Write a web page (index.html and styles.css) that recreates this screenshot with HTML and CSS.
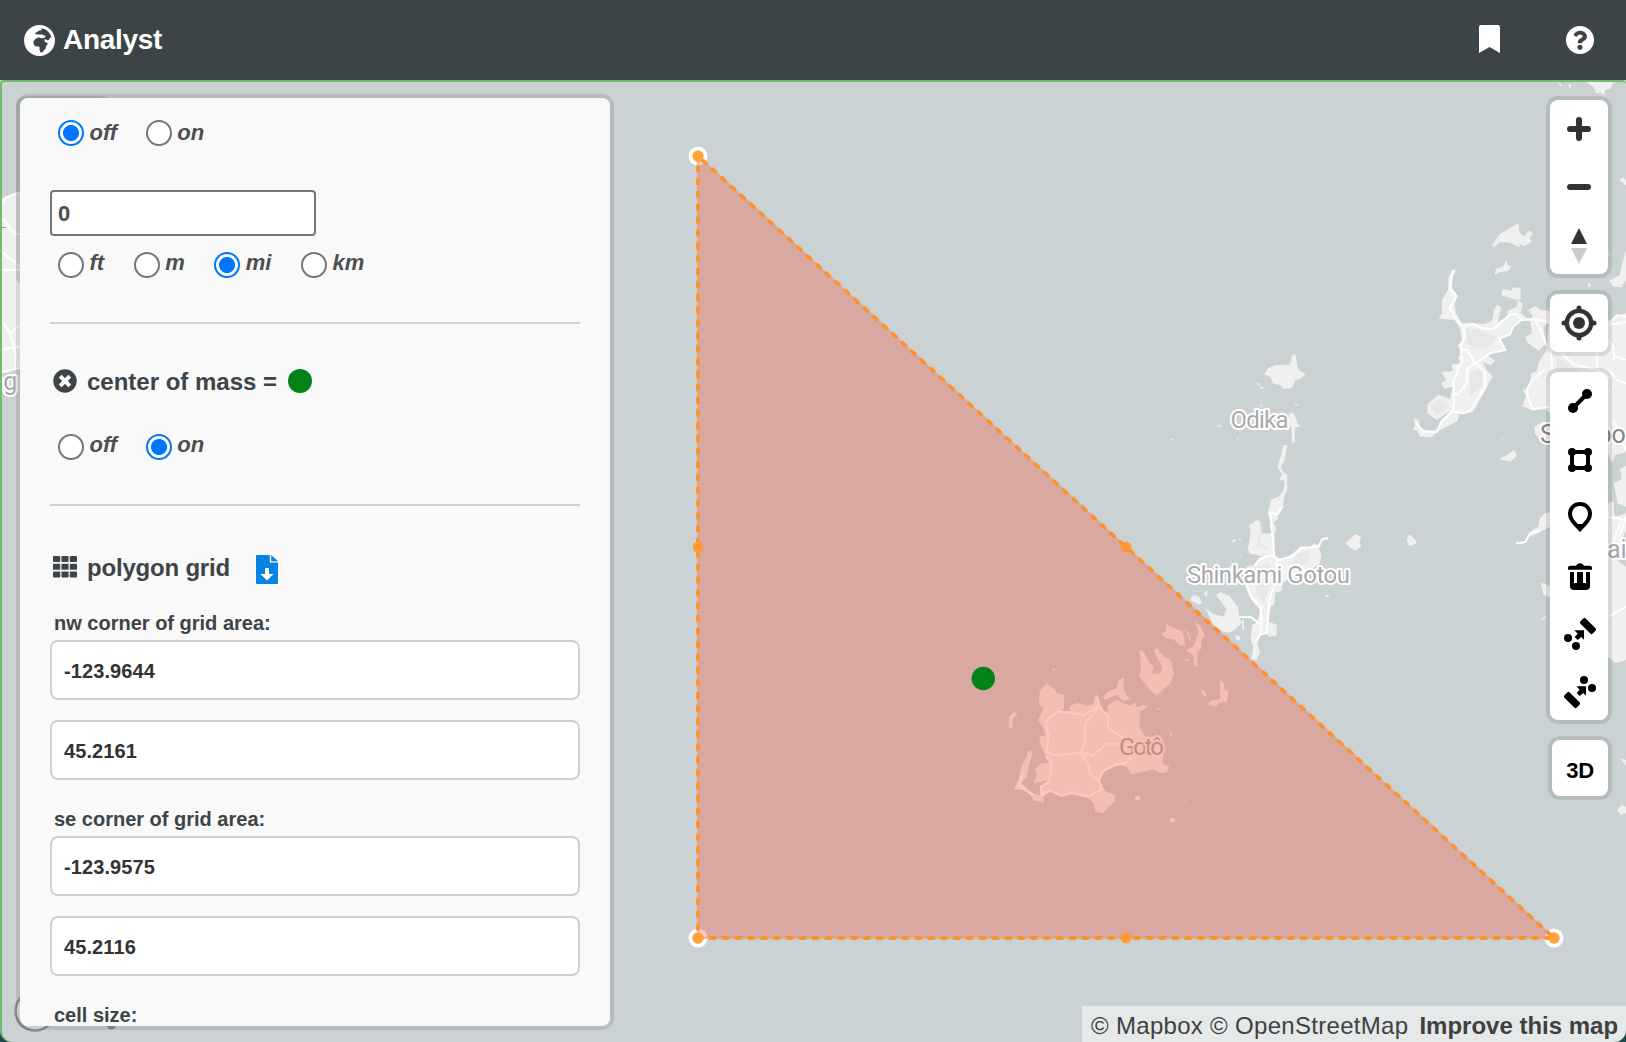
FILE: index.html
```html
<!DOCTYPE html>
<html lang="en">
<head>
<meta charset="utf-8">
<title>Analyst</title>
<link rel="stylesheet" href="styles.css">
</head>
<body>
<header class="topbar">
  <div class="brand">
    <svg class="brand-icon" viewBox="0 8 496 496"><path fill="#fff" d="M248 8C111.03 8 0 119.03 0 256s111.03 248 248 248 248-111.03 248-248S384.97 8 248 8zm160 215.5v6.93c0 5.87-3.32 11.24-8.57 13.86l-15.39 7.7a15.485 15.485 0 0 1-15.53-.97l-18.21-12.14a15.52 15.52 0 0 0-13.5-1.81l-2.65.88c-9.7 3.23-13.66 14.79-7.99 23.3l13.24 19.86c2.87 4.31 7.71 6.9 12.89 6.9h8.21c8.56 0 15.5 6.94 15.5 15.5v11.34c0 3.35-1.09 6.62-3.1 9.3l-18.74 24.98c-1.42 1.9-2.39 4.1-2.83 6.43l-4.3 22.83c-.62 3.29-2.29 6.29-4.76 8.56a159.608 159.608 0 0 0-25 29.16l-13.03 19.55a27.756 27.756 0 0 1-23.09 12.36c-10.51 0-20.12-5.94-24.82-15.34a78.902 78.902 0 0 1-8.33-35.29V367.5c0-8.56-6.94-15.5-15.5-15.5h-25.88c-14.49 0-28.38-5.76-38.63-16a54.659 54.659 0 0 1-16-38.63v-14.06c0-17.19 8.1-33.38 21.85-43.7l27.58-20.69a54.663 54.663 0 0 1 32.78-10.93h.89c8.48 0 16.85 1.97 24.43 5.77l14.72 7.36c3.68 1.84 7.93 2.14 11.83.84l47.31-15.77c6.33-2.11 10.6-8.03 10.6-14.7 0-8.56-6.94-15.5-15.5-15.5h-10.09c-4.11 0-8.05-1.63-10.96-4.54l-6.92-6.92a15.493 15.493 0 0 0-10.96-4.54H199.5c-8.56 0-15.5-6.94-15.5-15.5v-4.4c0-7.11 4.84-13.31 11.74-15.04l14.45-3.61c3.74-.94 7-3.23 9.14-6.44l8.08-12.11c2.87-4.31 7.71-6.9 12.89-6.9h24.21c8.56 0 15.5-6.94 15.5-15.5v-21.7C359.23 71.63 422.86 131.02 441.93 208H423.5c-8.56 0-15.5 6.94-15.5 15.5z"/></svg>
    <span class="brand-name">Analyst</span>
  </div>
  <nav class="top-actions">
    <svg class="bookmark" viewBox="0 0 21 28"><path fill="#fff" d="M2 0h17q2 0 2 2v26l-10.500-6L0 28V2q0-2 2-2z"/></svg>
    <svg class="help" viewBox="8 8 496 496"><path fill="#fff" d="M504 256c0 136.997-111.043 248-248 248S8 392.997 8 256C8 119.083 119.043 8 256 8s248 111.083 248 248zM262.655 90c-54.497 0-89.255 22.957-116.549 63.758-3.536 5.286-2.353 12.415 2.715 16.258l34.699 26.31c5.205 3.947 12.621 3.008 16.665-2.122 17.864-22.658 30.113-35.797 57.303-35.797 20.429 0 45.698 13.148 45.698 32.958 0 14.976-12.363 22.667-32.534 33.976C247.128 238.528 216 254.941 216 296v4c0 6.627 5.373 12 12 12h56c6.627 0 12-5.373 12-12v-1.333c0-28.462 83.186-29.647 83.186-106.667 0-58.002-60.165-102-116.531-102zM256 338c-25.365 0-46 20.635-46 46 0 25.364 20.635 46 46 46s46-20.636 46-46c0-25.365-20.635-46-46-46z"/></svg>
  </nav>
</header>

<main class="stage">
  <svg class="map" viewBox="0 80 1626 962">
    <rect x="0" y="80" width="1626" height="962" fill="#cad2d3"/>

    <!-- western mainland, behind the panel -->
    <path class="land" d="M0 200L8 196 20 192H60V368L20 368 6 373H0z"/>
    <g class="road">
      <path d="M0 206L5 198 12 195 24 191M0 219L5 221 14 234 24 234M2 252L24 270M0 270H24M2 321L10 333 16 357 15 367M2 349L24 346M11 333L20 325M2 372L24 367"/>
    </g>
    <path d="M0 227.500H6" stroke="#999" stroke-width="1"/>
    <text class="place" x="-10.500" y="390" font-size="25">ng</text>

    <!-- Shinkami islands -->
    <g transform="translate(1160 320) scale(.33333)">
      <g class="land">
        <path d="M312 163L325 145 345 135 390 134 397 104 407 103 412 140 420 153 438 162 420 177 405 181 396 205 370 207 362 196 338 190 332 172z"/>
        <path d="M290 190h10l-4 8zM298 199l12 2 2 6-12-2zM404 252h12v4h-12zM300 250l8 8-6 2zM168 320l12-7 6 8zM33 358l5-4 3 5-5 3zM230 360l5-8v10zM388 280l10-2 10 16 5 18 10 7-17 3-2 46-8 2-2-48-10-8z"/>
        <path d="M370 375H382L378 395 374 420 362 440 368 454 382 464V508L374 526 368 560 358 572 352 600 340 606 350 626 344 640V704L356 716 384 710 410 690 424 678 450 682 462 670 474 676 484 706 480 730 466 740 450 750 420 766 396 770 368 790 364 814 346 818 344 850 332 862 326 905 350 940 346 948 322 944 304 942 298 956 292 970 300 996 290 1020 274 1018 280 980 272 960 276 916 292 906 300 870 284 852 272 834 256 800 252 770 260 740 280 736 300 712 330 704 338 650 330 620 332 600 322 580 334 538 356 530 368 516 374 490 370 480 358 482 366 462 352 440 362 410z"/>
        <path d="M272 640L268 615 290 600 300 604 305 640 332 640 342 650V710L310 710 268 700 264 684z"/>
        <path d="M556 670L586 642 604 652 598 666 604 680 586 692 576 686zM212 664l14-8 4 4-12 8zM234 656h8v6zM235 706h6l6 8zM496 828l8-4 4 4-8 6zM92 832l12-8 14 8 8 16-10 6-22-12zM130 820l14-8-4 20zM200 745l24-10 16 16-28 6z"/>
        <path d="M136 864L160 882 190 890 200 868 168 826 180 816 210 828 222 846 234 862 240 900 246 908 228 926 210 938 190 936 160 914zM246 900h6v30h-5zM226 944l12 4 4 14-14-4zM330 905l20 10v30l-26 6z"/>
      </g>
      <path class="shade" d="M285 740L325 730 350 760 330 800 310 850 290 820zM400 705L450 690 440 735 400 740zM300 620L302 670 330 690 290 680z"/>
      <g class="road thin">
        <path d="M368 558L354 582 330 578 338 650 342 704 300 716 284 738M342 710L356 720 400 708 424 684 476 680 486 658 504 654M352 720L350 780 330 830 326 870 320 938 300 944 286 966M260 795L272 830 302 860 304 914 300 940M236 892H274L298 912"/>
      </g>
    </g>

    <!-- Hirado and the eastern coast -->
    <g transform="translate(1370 200) scale(.33333)">
      <g class="land">
        <path d="M364 138L390 102 430 78 446 70 448 98 464 108 476 92 490 100 480 114 484 126 464 138 452 134 446 142 420 128 388 126 376 140z"/>
        <path d="M374 224L378 206 398 200 410 180 412 194 424 200 412 214 390 216zM396 270L404 266 424 272 430 262 452 264V296L440 300 414 292 394 286z"/>
        <path d="M236 230L248 208 258 210 248 230 246 262 262 288 254 310 258 340 276 370 296 368 340 372 366 364 372 330 380 316 394 322 384 366 410 350 414 332 440 320 444 300 458 312 452 338 470 354 492 354 474 330 496 318 512 330 540 332V366L520 380 528 430 506 452 474 430 466 412 486 400 480 362 450 362 428 382 418 406 388 416 408 450 350 466 376 482 362 496 338 486 350 510 368 530 354 556 330 600 308 636 270 640 262 664 200 696 184 712 150 710 140 690 128 690 136 674 130 656 146 660 150 680 170 692 204 690 214 664 240 634 200 660 172 640 172 612 206 584 240 596 248 560 222 566 214 548 230 540 212 516 250 512 244 494 270 490 264 470 276 460 262 436 276 420 270 388 256 360 206 356 216 340 216 300 234 270z"/>
        <path d="M768 150L754 200 748 226 718 242 730 260 754 262 768 240zM652 252l6-4 5 8-5 8zM714 160h5v8zM768 340L740 346 720 360 700 366 536 366 530 450 505 490 500 515 484 520 480 560 458 570 468 590 456 618 490 632 520 620 540 640 540 700 700 720 730 800 768 860z"/>
        <path d="M388 778L420 760 432 750 440 764 416 784zM394 713h5v4h-5zM494 680L520 664 540 670V730L510 720 494 700z"/>
      </g>
      <path class="shade" d="M290 384L330 390 380 410 360 440 320 450 290 430zM300 520L340 500 335 560 300 590zM180 620L206 596 236 620 200 644zM560 470L640 520 640 600 560 560z"/>
      <path class="road thin" d="M250 212L242 240 242 268 260 288 240 322 258 360 280 380 310 372 334 384 370 388 420 344 440 342 454 360 492 358 540 366M454 360L430 380 420 404 388 416 406 450 360 460 316 490 292 504 290 550 266 582 248 584M280 382L284 410 272 440 276 488 264 500 262 520 250 540 252 600 248 634 214 664 200 696 160 694 138 670M316 490L344 516 346 560 300 632 280 640 248 634M276 450L290 450 316 490M490 350L516 400 530 438M540 366L546 510M574 460L610 492 680 510 768 560M680 456L682 508M716 376L740 346 768 350M716 420L730 440 732 480 750 540 740 570 716 574M716 376L768 366M730 466L768 480M524 510L486 540 470 570 476 600 490 628 540 620M724 640L768 640"/>
    </g>

    <g transform="translate(1500 360) scale(.33333)">
      <g class="land">
        <path d="M45 550L76 544 90 530 96 510 116 500 118 478 132 462 150 456V500L120 516 84 534 66 552zM0 296L24 286 44 274 50 288 30 306zM122 668L134 672 150 680V710L130 704zM124 780l10-12 4 2-12 12z"/>
        <path d="M310 470L326 430 340 424 345 470 378 460V510L360 560 350 600 378 620V900L346 910 324 890H300z"/>
        <path d="M330 0L378 0V290L330 300zM342 370L378 350V440L352 430zM362 330l16-12v30z"/>
      </g>
      <path fill="#cad2d3" d="M345 285l33-8v40l-18 10 6 22-22 16-14-40zM340 440l16 0 4 12-16 14z"/>
      <path class="road thin" d="M48 550L76 546 90 520 120 512M340 180L378 270M326 30L350 60 378 70M324 770L350 756 378 740M324 470L366 476 342 540M378 470L358 530"/>
    </g>

    <g transform="translate(1430 0) scale(.33333)">
      <path class="land" d="M384 246l10 6-2 10zM414 252l10 4-4 12zM468 246L552 246 540 266 524 270V286L510 278 498 280 490 260z"/>
      <path class="land" d="M568 540l12-8 8 8v16z"/>
    </g>
    <path class="land" d="M1617 810l5-5 4 2v6l-5 2zM1620 758l6 2v6z"/>
    <path class="land" d="M1407 539l2-5 5 4 3 5-6 3-3-1z"/>

    <!-- Goto -->
    <g transform="translate(980 600) scale(.33333)">
      <g class="land">
        <path d="M180 270L200 252 224 268 230 280 252 286V322L246 334 272 334 268 320 290 308 320 318 340 312 348 280 362 310 370 330 384 340 382 316 410 300 450 318 466 306 470 322 492 314 500 322 480 336 478 380 496 410 520 410 550 430 548 490 568 500 560 518 540 518 520 508 500 512 454 524 440 500 410 494 370 516 358 544 372 570 380 576 404 584 406 606 384 620 370 640 346 636 340 608 320 590 270 584 246 590 210 576 190 590 192 608 160 600 146 570 100 568 116 540 124 500 134 480 148 450 158 456 146 500 140 530 124 550 160 580 180 586 182 560 204 540 162 550 170 524 166 508 184 490 206 490 196 470 190 450 180 430 178 408 196 408 188 380 174 360 190 326 176 310z"/>
        <path d="M368 292L382 276 408 266 418 240 432 232 430 260 440 286 454 298 430 302 410 284 376 300z"/>
        <path d="M478 150L492 156 510 190 520 200 516 222 540 220 546 200 520 150 530 144 552 170 572 180 582 220 572 250 550 268 530 288 510 270 478 230 484 200zM544 100L558 96 560 72 580 84 604 92 612 110 616 140 600 136 580 118 552 112zM614 82l12 18 10 34-12-26zM644 60L662 80 674 106 664 120 662 150 652 156V200L642 196 640 166 618 150 640 140 650 110 656 96zM602 174l24 4-2 6zM630 208l4 12h-4zM594 46l8 2zM664 266L680 282 674 290 664 278zM720 240L732 250 734 270 746 272 740 306 716 308 710 320 684 314 690 304 720 296zM86 382L88 350 104 336 112 344 98 356 96 384zM216 204l10 4-4 6zM464 590l14-2 2 12-16 2zM568 656l16-2 2 14-14-2zM528 326l14-2v6zM514 352l8 8v6zM568 392l8 8v14zM610 602h6v4h-6z"/>
      </g>
      <path class="road thin" d="M352 290L356 316 314 344 236 334 196 364 206 408 200 456 230 466 304 458 314 430 316 370 356 320 382 348 384 384 430 412M304 458L340 466 380 430 420 432M304 458L326 500 330 524 356 542 370 512 410 494 438 490 456 470M200 470L216 486 206 546 182 560 186 584 210 572 246 588 274 576 320 590 368 568 356 542M128 520L116 556 160 586"/>
    </g>

    <g class="place">
      <text x="1230.500" y="427.500" textLength="58" font-size="24">Odika</text>
      <text x="1187" y="582.500" textLength="163" font-size="24">Shinkami Gotou</text>
      <text x="1119" y="755" textLength="45" font-size="24" class="place-goto">Gotô</text>
      <text x="1540" y="443" font-size="25" class="place-strong">S</text>
      <text x="1597.500" y="443" font-size="25" class="place-strong">bo</text>
      <text x="1607" y="558" font-size="25">ai</text>
    </g>

    <!-- drawn polygon -->
    <g fill="#ffae42">
      <circle cx="698" cy="547" r="5.500"/><circle cx="1126" cy="547" r="5.500"/><circle cx="1126" cy="938" r="5.500"/>
      <g stroke="#fff" stroke-width="4">
        <circle cx="698" cy="156" r="7.500"/><circle cx="698" cy="938" r="7.500"/><circle cx="1554" cy="938" r="7.500"/>
      </g>
    </g>
    <path d="M698 156V938H1554z" fill="rgb(255,68,38)" fill-opacity=".29"/>
    <g fill="none" stroke-linecap="round">
      <path d="M698 156V938H1554z" stroke="#e2a06a" stroke-opacity=".55" stroke-width="2.500"/>
      <path d="M698 156V938H1554z" stroke="#ff9030" stroke-width="3.800" stroke-dasharray="4 8.850" stroke-dashoffset="2"/>
    </g>
    <g fill="#ffa33a">
      <circle cx="698" cy="156" r="5.500"/><circle cx="698" cy="938" r="5.500"/><circle cx="1554" cy="938" r="5.500"/>
    </g>
    <g fill="#ff9a35">
      <circle cx="698" cy="547" r="5"/><circle cx="1126" cy="547" r="5"/><circle cx="1126" cy="938" r="5"/>
    </g>
    <circle cx="983.300" cy="678.500" r="11.700" fill="#028217"/>

    <!-- controls tucked under the panel -->
    <rect x="16" y="96" width="96" height="190" rx="10" fill="#000" fill-opacity=".1"/>
    <circle cx="35" cy="1011" r="19.500" fill="#e2e6e6" stroke="#8b9091" stroke-width="2.500"/>
    <circle cx="111.500" cy="1025" r="4.500" fill="#8b9091"/>
  </svg>

  <section class="panel">
    <div class="options">
      <label class="option"><i class="radio checked"></i><span>off</span></label>
      <label class="option"><i class="radio"></i><span>on</span></label>
    </div>
    <div class="radius-field">0</div>
    <div class="options units">
      <label class="option"><i class="radio"></i><span>ft</span></label>
      <label class="option"><i class="radio"></i><span>m</span></label>
      <label class="option"><i class="radio checked"></i><span>mi</span></label>
      <label class="option"><i class="radio"></i><span>km</span></label>
    </div>
    <hr class="rule">
    <h2 class="heading mass">
      <svg width="24" height="24" viewBox="0 0 24 24"><circle cx="12" cy="12" r="11.700" fill="#3d4447"/><path d="M7.200 7.200l9.600 9.600M16.800 7.200l-9.600 9.600" stroke="#fff" stroke-width="4"/></svg>
      <span>center of mass =</span><i class="swatch"></i>
    </h2>
    <div class="options raised">
      <label class="option"><i class="radio"></i><span>off</span></label>
      <label class="option"><i class="radio checked"></i><span>on</span></label>
    </div>
    <hr class="rule">
    <h2 class="heading grid">
      <svg width="24" height="22" viewBox="0 0 24 22" fill="#3d4447"><rect width="7.200" height="6" rx="1"/><rect x="8.400" width="7.200" height="6" rx="1"/><rect x="16.800" width="7.200" height="6" rx="1"/><rect y="7.800" width="7.200" height="6" rx="1"/><rect x="8.400" y="7.800" width="7.200" height="6" rx="1"/><rect x="16.800" y="7.800" width="7.200" height="6" rx="1"/><rect y="15.500" width="7.200" height="6" rx="1"/><rect x="8.400" y="15.500" width="7.200" height="6" rx="1"/><rect x="16.800" y="15.500" width="7.200" height="6" rx="1"/></svg>
      <span>polygon grid</span>
      <svg class="file" width="22" height="29" viewBox="0 0 22 29"><path fill="#0784e3" d="M1 0H13.800V7.500H22V28q0 1-1 1H1q-1 0-1-1V1Q0 0 1 0zM15.200 0L22 6.300H15.200z"/><path d="M9 13h4v6h4.500L11 25.500 4.500 19H9z" fill="#fff"/></svg>
    </h2>
    <h3 class="field-label">nw corner of grid area:</h3>
    <div class="field">-123.9644</div>
    <div class="field">45.2161</div>
    <h3 class="field-label">se corner of grid area:</h3>
    <div class="field">-123.9575</div>
    <div class="field">45.2116</div>
    <h3 class="field-label">cell size:</h3>
  </section>

  <aside class="tools">
    <div class="group">
      <svg viewBox="0 0 174 174"><path d="M60 87H114M87 60V114" stroke="#333" stroke-width="18" stroke-linecap="round"/></svg>
      <svg viewBox="0 0 174 174"><path d="M60 87H114" stroke="#333" stroke-width="18" stroke-linecap="round"/></svg>
      <svg viewBox="0 0 174 174"><path d="M87 36L111 84H63z" fill="#333"/><path d="M63 96H111L87 144z" fill="#ccc"/></svg>
    </div>
    <div class="group">
      <svg viewBox="0 0 174 174"><circle cx="87" cy="87" r="36.500" fill="none" stroke="#333" stroke-width="13"/><circle cx="87" cy="87" r="18" fill="#333"/><path d="M87 42v1M87 131v1M42 87h1M131 87h1" stroke="#333" stroke-width="15" stroke-linecap="round"/></svg>
    </div>
    <div class="group">
      <svg viewBox="0 0 174 174"><circle cx="69" cy="108" r="15"/><circle cx="111" cy="66" r="15"/><path d="M69 108L111 66" stroke="#000" stroke-width="12"/></svg>
      <svg viewBox="0 0 174 174"><path d="M66 66H114V114H66z" fill="none" stroke="#000" stroke-width="12"/><circle cx="66" cy="66" r="12"/><circle cx="114" cy="66" r="12"/><circle cx="66" cy="114" r="12"/><circle cx="114" cy="114" r="12"/></svg>
      <svg viewBox="0 0 174 174"><path fill-rule="evenodd" d="M90 42C69 42 54 58 54 78 54 100 78 118 90 132 102 118 126 100 126 78 126 58 111 42 90 42zM90 54C104 54 114 64 114 78 114 90 104 99 97 108H83C76 99 66 90 66 78 66 64 76 54 90 54z"/></svg>
      <svg viewBox="0 0 174 174"><path d="M54 71V66Q54 59 62 59H78Q82 52 90 52T102 59H118Q126 59 126 66V71zM60 78H72V111H81V78H99V111H108V78H120V119Q120 132 107 132H73Q60 132 60 119z"/></svg>
      <svg viewBox="0 0 174 174"><circle cx="54" cy="102" r="12"/><circle cx="78" cy="126" r="12"/><path d="M73 79H102V107L94 99 83 108 74 99 83 89z"/><rect x="88" y="55" width="52" height="22" rx="5" transform="rotate(45 114 66)"/></svg>
      <svg viewBox="0 0 174 174"><circle cx="102" cy="54" r="12"/><circle cx="126" cy="78" r="12"/><path d="M79 73H108V101L100 93 89 102 80 93 89 83z"/><rect x="40" y="103" width="52" height="22" rx="5" transform="rotate(45 66 114)"/></svg>
    </div>
    <div class="group three-d">3D</div>
  </aside>

  <footer class="attribution"><span>© Mapbox</span> <span>© OpenStreetMap</span><b>Improve this map</b></footer>
</main>
</body>
</html>
```
FILE: styles.css
```css
* { box-sizing: border-box; }
body {
  margin: 0;
  width: 1626px;
  height: 1042px;
  display: flex;
  flex-direction: column;
  overflow: hidden;
  background: #1f4a4c;
  font-family: "Liberation Sans", Arial, sans-serif;
}
svg { display: block; }

.topbar {
  height: 80px;
  background: #3d4447;
  display: flex;
  align-items: center;
  justify-content: space-between;
  padding: 0 32px 0 24px;
}
.brand { display: flex; align-items: center; gap: 8px; }
.brand-icon { width: 31px; height: 31px; }
.brand-name { color: #fff; font-size: 28px; font-weight: 700; line-height: 32px; letter-spacing: -.3px; }
.top-actions { display: flex; align-items: center; gap: 66px; }
.bookmark { width: 21px; height: 28px; margin-top: -2px; }
.help { width: 28px; height: 28px; margin-top: -1px; }

.stage {
  position: relative;
  flex: 1;
  overflow: hidden;
  border-radius: 0 0 12px 12px;
}
.stage::after {
  content: "";
  position: absolute;
  inset: 0;
  border-top: 2px solid #72bd6c;
  border-left: 2px solid #72bd6c;
  border-radius: 4px 4px 0 12px;
  pointer-events: none;
}
.map { width: 1626px; height: 962px; }
.land { fill: #f0f0ee; }
.shade { fill: #e8e8e6; }
.road { fill: none; stroke: #fff; stroke-width: 2; stroke-linejoin: round; }
.road.thin { stroke-width: 6; }
.place, .place text {
  font-family: Roboto, sans-serif;
  fill: #a9a9a9;
  stroke: #fff;
  stroke-width: 4px;
  stroke-linejoin: round;
  paint-order: stroke;
}
.place .place-strong { fill: #858585; }
.place .place-goto { stroke: #f3f1f0; }

.panel {
  position: absolute;
  left: 20px;
  top: 18px;
  width: 590px;
  height: 928px;
  padding: 22px 30px 0;
  overflow: hidden;
  background: #f9f9f9;
  border-radius: 8px;
  box-shadow: 0 0 0 4px rgba(0, 0, 0, .1);
}
.options { display: flex; gap: 28.500px; height: 26px; padding-left: 8px; }
.units { gap: 29.500px; }
.option { display: flex; gap: 5.500px; color: #4e4e4e; font: italic 700 22px/26px "Liberation Sans", Arial, sans-serif; }
.units .option span, .raised .option span { margin-top: -2px; }
.radio { width: 26px; height: 26px; border: 2px solid #767676; border-radius: 50%; background: #fff; }
.radio.checked { border-color: #0075ff; background: radial-gradient(circle, #0075ff 7.600px, #fff 8.400px); }
.radius-field {
  width: 266px;
  height: 46px;
  margin: 44px 0 16px;
  padding-left: 6px;
  border: 2px solid #767676;
  border-radius: 4px;
  background: #fff;
  color: #4e4e4e;
  font: 700 22px/44px "Liberation Sans", Arial, sans-serif;
}
.rule { height: 2px; margin: 44px 0 0; border: 0; background: #d0d0d0; }
.heading { display: flex; align-items: center; margin: 0; color: #3d4447; font-size: 24px; line-height: 28px; }
.heading span { margin-left: 10px; }
.mass { height: 28px; margin: 43px 0 39px; padding-left: 3px; }
.mass span { padding-top: 1px; }
.swatch { width: 24px; height: 24px; margin-left: 11px; border-radius: 50%; background: #028217; }
.grid { height: 29px; margin-top: 49px; padding-left: 3px; margin-bottom: 27px; }
.grid svg:first-child { margin-top: -5px; }
.grid span { margin-top: -3px; letter-spacing: -.2px; }
.file { margin-left: 26px; }
.field-label { margin: 27px 0 5px; padding-left: 4px; color: #3d4447; font-size: 20px; line-height: 24px; }
.field {
  height: 60px;
  padding-left: 12px;
  border: 2px solid #d0d0d0;
  border-radius: 8px;
  background: #fff;
  color: #333;
  font-size: 20px;
  font-weight: 700;
  line-height: 58px;
  letter-spacing: .1px;
}
.field + .field { margin-top: 20px; }

.tools {
  position: absolute;
  top: 20px;
  right: 18px;
  display: flex;
  flex-direction: column;
  align-items: flex-end;
  gap: 20px;
}
.group {
  width: 58px;
  border-radius: 8px;
  background: #fff;
  box-shadow: 0 0 0 4px rgba(0, 0, 0, .1);
}
.group svg { width: 58px; height: 58px; }
.three-d { width: 56px; height: 56px; text-align: center; font-size: 22px; font-weight: 700; line-height: 61px; letter-spacing: -.3px; }

.attribution {
  position: absolute;
  right: 0;
  bottom: 0;
  width: 544px;
  height: 36px;
  padding-left: 9px;
  background: rgba(255, 255, 255, .5);
  color: #404040;
  font-size: 24px;
  line-height: 39px;
  letter-spacing: .3px;
  white-space: nowrap;
}
.attribution b { margin-left: 11px; letter-spacing: 0; }
```
